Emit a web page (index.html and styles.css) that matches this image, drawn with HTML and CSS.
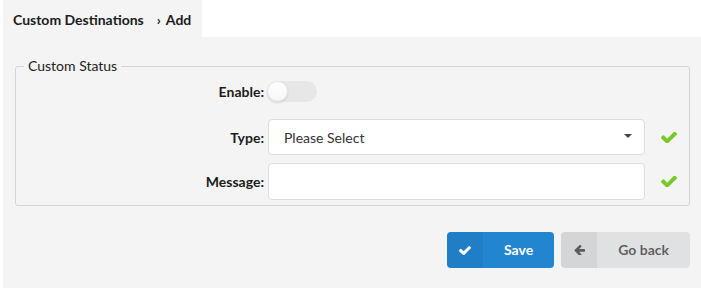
FILE: index.html
```html
<!DOCTYPE html>
<html>
<head>
<meta charset="utf-8">
<link rel="stylesheet" href="styles.css">
</head>
<body>
<div class="page">
  <div class="tabbar">
    <div class="tab">Custom Destinations<span class="sep">›</span>Add</div>
  </div>
  <div class="content">
    <fieldset class="group">
      <legend>Custom Status</legend>
      <div class="form">
        <label class="lbl lbl-top">Enable:</label>
        <div class="ctl ctl-top"><span class="toggle"><span class="knob"></span></span></div>
        <div></div>

        <label class="lbl">Type:</label>
        <div class="ctl"><div class="select"><span>Please Select</span><span class="caret"></span></div></div>
        <div class="ok"><svg viewBox="121 420 1550 980" width="16" height="11"><path fill="#79c82a" d="M1671 566q0 40-28 68l-724 724-136 136q-28 28-68 28t-68-28l-136-136-362-362q-28-28-28-68t28-68l136-136q28-28 68-28t68 28l294 295 656-657q28-28 68-28t68 28l136 136q28 28 28 68z"/></svg></div>

        <label class="lbl">Message:</label>
        <div class="ctl"><div class="input input-msg"></div></div>
        <div class="ok"><svg viewBox="121 420 1550 980" width="16" height="11"><path fill="#79c82a" d="M1671 566q0 40-28 68l-724 724-136 136q-28 28-68 28t-68-28l-136-136-362-362q-28-28-28-68t28-68l136-136q28-28 68-28t68 28l294 295 656-657q28-28 68-28t68 28l136 136q28 28 28 68z"/></svg></div>
      </div>
    </fieldset>
    <div class="actions">
      <button class="btn btn-primary"><span class="btn-icon"><svg viewBox="121 420 1550 980" width="12" height="9"><path fill="#ffffff" d="M1671 566q0 40-28 68l-724 724-136 136q-28 28-68 28t-68-28l-136-136-362-362q-28-28-28-68t28-68l136-136q28-28 68-28t68 28l294 295 656-657q28-28 68-28t68 28l136 136q28 28 28 68z"/></svg></span>Save</button>
      <button class="btn btn-default"><span class="btn-icon"><svg viewBox="128 256 1536 1280" width="11" height="10"><path fill="#5c5c5c" d="M1664 896v128q0 53-32.5 90.5t-84.5 37.5h-704l293 294q38 36 38 90t-38 90l-75 76q-37 37-90 37-52 0-91-37l-651-652q-37-37-37-90 0-52 37-91l651-650q38-38 91-38 52 0 90 38l75 74q38 38 38 91t-38 91l-293 293h704q52 0 84.5 37.5t32.5 90.5z"/></svg></span>Go back</button>
    </div>
  </div>
</div>
</body>
</html>
```
FILE: styles.css
```css
html, body {
  margin: 0;
  padding: 0;
  background: #ffffff;
}
body {
  font-family: Lato, "Noto Sans", sans-serif;
  font-size: 14px;
  color: rgba(0, 0, 0, 0.87);
}
.page {
  height: 288px;
  display: flex;
  flex-direction: column;
  padding-left: 3px;
}
.tabbar {
  display: flex;
  height: 37px;
}
.tab {
  background: #f4f4f4;
  font-weight: 700;
  padding: 1px 10px 0 10px;
  display: flex;
  align-items: center;
  width: 179px;
  color: #1b1c1d;
}
.sep {
  margin: 0 5px 0 13px;
  font-weight: 700;
}
.content {
  flex: 1;
  background: #f4f4f4;
  padding: 21px 11px 0 12px;
}
.group {
  margin: 0;
  border: 1px solid #d4d4d4;
  border-radius: 3px;
  padding: 7px 8px 5px 8px;
}
.group legend {
  padding: 0 4px;
  line-height: 16px;
  color: #222;
}
.form {
  display: grid;
  grid-template-columns: 240px 377px 32px;
  grid-template-rows: 30px 36px 37px;
  column-gap: 4px;
  row-gap: 8px;
}
.lbl {
  font-weight: 700;
  text-align: right;
  display: flex;
  align-items: center;
  justify-content: flex-end;
  color: #1b1c1d;
}
.lbl-top {
  align-self: start;
  height: 21px;
}
.ctl {
  display: flex;
}
.ctl-top {
  align-self: start;
  margin-left: -1px;
}
.toggle {
  position: relative;
  display: block;
  width: 50px;
  height: 21px;
  border-radius: 11px;
  background: #e7e7e7;
}
.knob {
  position: absolute;
  left: 0;
  top: 0;
  width: 21px;
  height: 21px;
  border-radius: 50%;
  background: linear-gradient(#ffffff, #f6f6f6);
  box-shadow: 0 1px 2px 0 rgba(34, 36, 38, 0.15), 0 0 0 1px rgba(34, 36, 38, 0.1) inset;
}
.select, .input {
  flex: 1;
  background: #ffffff;
  border: 1px solid #dcdcdc;
  border-radius: 4px;
  box-sizing: border-box;
}
.select {
  display: flex;
  align-items: center;
  justify-content: space-between;
  padding: 0 12px 0 15px;
  color: #333;
}
.caret {
  width: 0;
  height: 0;
  border-left: 4px solid transparent;
  border-right: 4px solid transparent;
  border-top: 4px solid #444;
  margin-top: -3px;
}
.ok {
  display: flex;
  align-items: center;
  padding-left: 12px;
}
.actions {
  display: flex;
  justify-content: flex-end;
  gap: 7px;
  margin-top: 26px;
}
.btn {
  position: relative;
  font-family: Lato, "Noto Sans", sans-serif;
  font-size: 14px;
  font-weight: 700;
  line-height: 14px;
  height: 36px;
  border: 0;
  border-radius: 4px;
  padding: 11px 21px 11px 57px;
  cursor: pointer;
}
.btn-icon {
  position: absolute;
  left: 0;
  top: 0;
  bottom: 0;
  width: 36px;
  display: flex;
  align-items: center;
  justify-content: center;
  background: rgba(0, 0, 0, 0.05);
  border-radius: 4px 0 0 4px;
}
.btn-primary {
  background: #2185d0;
  color: #ffffff;
}
.btn-default {
  background: #e0e1e2;
  color: rgba(0, 0, 0, 0.6);
}
```
